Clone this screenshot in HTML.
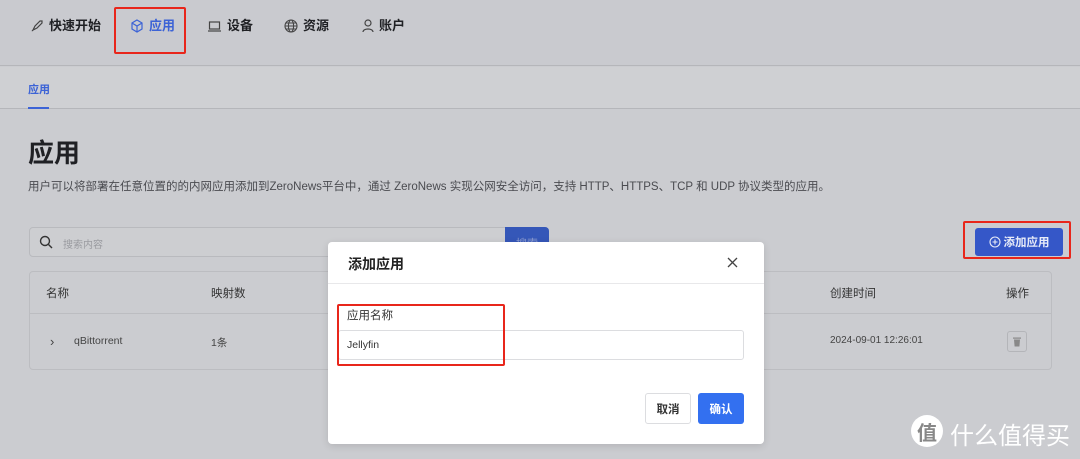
<!DOCTYPE html>
<html><head><meta charset="utf-8"><style>
*{box-sizing:border-box;margin:0;padding:0}
body{width:1080px;height:459px;overflow:hidden;background:#cbccd0;font-family:"Liberation Sans","Noto Sans CJK SC",sans-serif;color:#1f2024;position:relative}
.a{position:absolute}
.nav{font-size:13px;font-weight:bold;top:17px;height:18px;line-height:18px;display:flex;align-items:center;gap:5px}
.red{border:2px solid #e8261b;border-radius:2px}
svg{display:block}
</style></head><body>
<div class="a" style="left:0;top:0;width:1080px;height:66px;background:#c9cacf;border-bottom:1px solid #b5b6ba"></div>
<div class="a" style="left:0;top:67px;width:1080px;height:42px;background:#cfd0d3;border-bottom:1px solid #b5b6ba"></div>
<div class="a nav" style="left:30px"><svg width="14" height="14" viewBox="0 0 14 14" fill="none" stroke="#444" stroke-width="1.2"><path d="M3 11l2-4 5-5 2 0 0 2-5 5z M2 12l2-2"/></svg>快速开始</div>
<div class="a nav" style="left:130px;color:#3c63d6"><svg width="14" height="14" viewBox="0 0 14 14" fill="none" stroke="#3c63d6" stroke-width="1.2"><path d="M7 1l5 3v6l-5 3-5-3V4z M2 4l5 3 5-3 M7 7v6"/></svg>应用</div>
<div class="a red" style="left:114px;top:7px;width:72px;height:47px"></div>
<div class="a nav" style="left:207px"><svg width="15" height="14" viewBox="0 0 15 14" fill="none" stroke="#444" stroke-width="1.2"><rect x="2.5" y="3" width="10" height="7"/><path d="M1 12h13"/></svg>设备</div>
<div class="a nav" style="left:284px"><svg width="14" height="14" viewBox="0 0 14 14" fill="none" stroke="#444" stroke-width="1.1"><circle cx="7" cy="7" r="6"/><ellipse cx="7" cy="7" rx="2.6" ry="6"/><path d="M1 7h12M2 4h10M2 10h10"/></svg>资源</div>
<div class="a nav" style="left:362px"><svg width="12" height="14" viewBox="0 0 12 14" fill="none" stroke="#444" stroke-width="1.2"><circle cx="6" cy="4" r="3"/><path d="M1 13c0-4 10-4 10 0"/></svg>账户</div>
<div class="a" style="left:28px;top:81px;font-size:11px;font-weight:bold;color:#3c63d6">应用</div>
<div class="a" style="left:28px;top:107px;width:21px;height:2px;background:#3c63d6"></div>
<div class="a" style="left:28px;top:133px;font-size:26px;font-weight:bold">应用</div>
<div class="a" style="left:28px;top:178px;font-size:11.5px;color:#4a4b50">用户可以将部署在任意位置的的内网应用添加到ZeroNews平台中，通过 ZeroNews 实现公网安全访问，支持 HTTP、HTTPS、TCP 和 UDP 协议类型的应用。</div>
<div class="a" style="left:29px;top:227px;width:520px;height:30px;border:1px solid #b9babe;border-radius:4px;background:#cdced1"></div>
<svg class="a" style="left:39px;top:235px" width="14" height="14" viewBox="0 0 14 14" fill="none" stroke="#333" stroke-width="1.4"><circle cx="6" cy="6" r="4.5"/><path d="M9.5 9.5l3.5 3.5"/></svg>
<div class="a" style="left:63px;top:236px;font-size:10px;color:#9a9ba0">搜索内容</div>
<div class="a" style="left:505px;top:227px;width:44px;height:30px;background:#3557b8;border-radius:0 4px 4px 0;color:#8a9ad0;font-size:11px;text-align:center;padding-top:8px">搜索</div>
<div class="a" style="left:975px;top:228px;width:88px;height:28px;background:#3557c8;border-radius:3px;color:#e8ecf8;font-size:11.5px;font-weight:bold;display:flex;align-items:center;justify-content:center;gap:3px"><svg width="12" height="12" viewBox="0 0 12 12" fill="none" stroke="#e8ecf8" stroke-width="1.1"><circle cx="6" cy="6" r="5"/><path d="M6 3.5v5M3.5 6h5"/></svg>添加应用</div>
<div class="a red" style="left:963px;top:221px;width:108px;height:38px"></div>
<div class="a" style="left:29px;top:271px;width:1023px;height:99px;border:1px solid #bcbdc1;border-radius:4px;background:#cbccd0"></div>
<div class="a" style="left:30px;top:313px;width:1021px;height:1px;background:#bcbdc1"></div>
<div class="a" style="left:46px;top:285px;font-size:11.5px;color:#333">名称</div>
<div class="a" style="left:211px;top:285px;font-size:11.5px;color:#333">映射数</div>
<div class="a" style="left:830px;top:285px;font-size:11.5px;color:#333">创建时间</div>
<div class="a" style="left:1006px;top:285px;font-size:11.5px;color:#333">操作</div>
<div class="a" style="left:50px;top:334px;font-size:13px;color:#444">›</div>
<div class="a" style="left:74px;top:335px;font-size:10.5px;color:#444">qBittorrent</div>
<div class="a" style="left:211px;top:335px;font-size:10.5px;color:#444">1条</div>
<div class="a" style="left:830px;top:335px;font-size:10px;color:#444">2024-09-01 12:26:01</div>
<div class="a" style="left:1007px;top:331px;width:20px;height:21px;border:1px solid #b4b5b9;border-radius:3px"></div>
<svg class="a" style="left:1012px;top:336px" width="10" height="11" viewBox="0 0 10 11" fill="#888"><rect x="1" y="1.5" width="8" height="1.2"/><path d="M2 3.5h6l-.6 7H2.6z"/></svg>
<div class="a" style="left:328px;top:242px;width:436px;height:202px;background:#fff;border-radius:4px;box-shadow:0 2px 8px rgba(0,0,0,.12)"></div>
<div class="a" style="left:328px;top:283px;width:436px;height:1px;background:#e8e8ea"></div>
<div class="a" style="left:348px;top:254px;font-size:14px;font-weight:bold;color:#222">添加应用</div>
<svg class="a" style="left:727px;top:257px" width="11" height="11" viewBox="0 0 11 11" stroke="#444" stroke-width="1.3"><path d="M1 1l9 9M10 1l-9 9"/></svg>
<div class="a" style="left:347px;top:307px;font-size:11.5px;color:#333">应用名称</div>
<div class="a" style="left:338px;top:330px;width:406px;height:30px;border:1px solid #dcdde0;border-radius:3px"></div>
<div class="a" style="left:347px;top:339px;font-size:10.5px;color:#333">Jellyfin</div>
<div class="a red" style="left:337px;top:304px;width:168px;height:62px"></div>
<div class="a" style="left:645px;top:393px;width:46px;height:31px;border:1px solid #dcdde0;border-radius:3px;font-size:11.5px;font-weight:bold;color:#333;display:flex;align-items:center;justify-content:center">取消</div>
<div class="a" style="left:698px;top:393px;width:46px;height:31px;background:#3370f0;border-radius:3px;font-size:11.5px;font-weight:bold;color:#fff;display:flex;align-items:center;justify-content:center">确认</div>
<div class="a" style="left:911px;top:415px;width:32px;height:32px;border-radius:50%;background:#fff;color:#888;font-size:20px;font-weight:bold;display:flex;align-items:center;justify-content:center">值</div>
<div class="a" style="left:950px;top:416px;font-size:24px;color:#fff">什么值得买</div>
</body></html>
